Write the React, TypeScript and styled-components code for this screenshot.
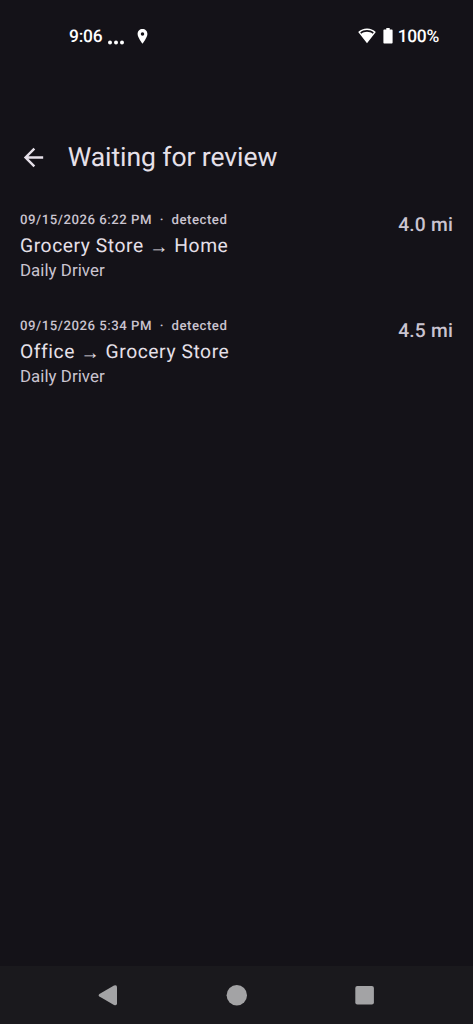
import React from "react";
import styled, { createGlobalStyle } from "styled-components";

const GlobalStyle = createGlobalStyle`
  *, *::before, *::after { box-sizing: border-box; }
  body { margin: 0; background: #141218; }
`;

const Screen = styled.div`
  display: flex;
  flex-direction: column;
  width: 100%;
  height: 100vh;
  background: #141218;
  color: #e6e0e9;
  font-family: Roboto, "Noto Sans", sans-serif;
  text-rendering: geometricPrecision;
  overflow: hidden;
`;

const StatusBar = styled.header`
  display: flex;
  justify-content: space-between;
  height: 119px;
  padding: 26px 34px 0 69px;
  color: #fff;
  font-size: 17.4px;
  font-weight: 500;
  line-height: 22px;
`;

const StatusGroup = styled.div`
  display: flex;
  height: 20px;
  white-space: nowrap;
`;

const Clock = styled.span`
  width: 38px;
  letter-spacing: -0.2px;
`;

const Percent = styled.span`
  margin-left: 5px;
  letter-spacing: -0.28px;
`;

const StatusIcon = styled.svg<{ $gap?: number }>`
  display: block;
  flex: none;
  margin-left: ${({ $gap = 0 }) => $gap}px;
  fill: #fff;
`;

const AppBar = styled.div`
  display: flex;
  align-items: center;
  height: 77px;
  padding-left: 19px;
`;

const BackButton = styled.button`
  display: flex;
  padding: 0;
  border: 0;
  background: none;
  color: inherit;
`;

const Title = styled.h1`
  margin: 0 0 0 19.7px;
  font-size: 26.5px;
  font-weight: 400;
  line-height: 34px;
  letter-spacing: -0.07px;
`;

const TripList = styled.ul`
  flex: 1;
  margin: 0;
  padding: 0;
  list-style: none;
`;

const TripItem = styled.li`
  display: flex;
  justify-content: space-between;
  height: 106px;
  padding: 15px 20px 0;
`;

const Overline = styled.div`
  color: #cac4d0;
  font-size: 13.2px;
  font-weight: 500;
  line-height: 20px;
  letter-spacing: 0.52px;
  white-space: pre;
`;

const Route = styled.div`
  font-size: 19.25px;
  line-height: 29px;
  letter-spacing: 0.57px;
`;

const RouteArrow = styled.span`
  display: inline-block;
  line-height: 1;
  transform: translateY(1px);
`;

const Vehicle = styled.div`
  color: #cac4d0;
  font-size: 16.85px;
  line-height: 23px;
  letter-spacing: 0.05px;
`;

const Distance = styled.div`
  color: #cac4d0;
  font-size: 19.25px;
  font-weight: 500;
  line-height: 28.6px;
  letter-spacing: 0.18px;
`;

const NavBar = styled.nav`
  display: flex;
  align-items: center;
  justify-content: space-between;
  height: 58px;
  padding: 0 97px;
  background: #1a191d;
`;

const NavIcon = styled.svg`
  display: block;
  fill: #a3a3a5;
`;

const trips = [
  { time: "09/15/2026 6:22 PM", from: "Grocery Store", to: "Home", miles: "4.0 mi" },
  { time: "09/15/2026 5:34 PM", from: "Office", to: "Grocery Store", miles: "4.5 mi" },
];

export default function App() {
  return (
    <Screen>
      <GlobalStyle />
      <StatusBar>
        <StatusGroup>
          <Clock>9:06</Clock>
          <StatusIcon width="18" height="20" viewBox="0 0 18 20">
            <circle cx="3" cy="16.5" r="2" />
            <circle cx="9" cy="16.5" r="2" />
            <circle cx="15" cy="16.5" r="2" />
          </StatusIcon>
          <StatusIcon $gap={12} width="11" height="20" viewBox="0 0 11 20">
            <path
              fillRule="evenodd"
              d="M5.5 3C2.7 3 .6 5.1.6 7.9c0 3.5 4.9 9.7 4.9 9.7s4.9-6.2 4.9-9.7C10.4 5.1 8.3 3 5.5 3Zm0 3.2a1.75 1.75 0 1 1 0 3.5 1.75 1.75 0 0 1 0-3.5Z"
            />
          </StatusIcon>
        </StatusGroup>
        <StatusGroup>
          <StatusIcon width="18" height="20" viewBox="0 0 18 20">
            <path
              fillRule="evenodd"
              d="M9 2.6C5.6 2.6 2.5 3.9.2 6.1L9 17.2l8.8-11.1C15.5 3.9 12.4 2.6 9 2.6Zm0 1.5c2.5 0 4.9.8 6.8 2.3l-1.1 1.3C13.1 6.5 11.1 5.8 9 5.8s-4.1.7-5.7 1.9L2.2 6.4C4.1 4.9 6.5 4.1 9 4.1Z"
            />
          </StatusIcon>
          <StatusIcon $gap={7} width="10" height="20" viewBox="0 0 10 20">
            <path d="M3.3 2h3.4v1.4h1.9c.6 0 1 .4 1 1v12.2c0 .6-.4 1-1 1H1.4c-.6 0-1-.4-1-1V4.4c0-.6.4-1 1-1h1.9Z" />
          </StatusIcon>
          <Percent>100%</Percent>
        </StatusGroup>
      </StatusBar>
      <AppBar>
        <BackButton aria-label="Back">
          <svg width="29" height="29" viewBox="0 0 24 24" fill="currentColor">
            <path d="M20 11H7.83l5.59-5.59L12 4l-8 8 8 8 1.41-1.41L7.83 13H20v-2Z" />
          </svg>
        </BackButton>
        <Title>Waiting for review</Title>
      </AppBar>
      <TripList>
        {trips.map((trip) => (
          <TripItem key={trip.time}>
            <div>
              <Overline>{trip.time + "  ·  detected"}</Overline>
              <Route>
                {trip.from} <RouteArrow>→</RouteArrow> {trip.to}
              </Route>
              <Vehicle>Daily Driver</Vehicle>
            </div>
            <Distance>{trip.miles}</Distance>
          </TripItem>
        ))}
      </TripList>
      <NavBar>
        <NavIcon width="22" height="22" viewBox="0 0 22 22">
          <path d="M2.4 10.1 17 1.5Q20 .3 20 3.2v16q0 2.9-3 1.700L2.400 12.600q-1.500-1.200 0-2.500Z" />
        </NavIcon>
        <NavIcon width="22" height="22" viewBox="0 0 22 22">
          <circle cx="10.8" cy="11.3" r="10.2" />
        </NavIcon>
        <NavIcon width="22" height="22" viewBox="0 0 22 22">
          <rect x="1.3" y="2" width="18.6" height="18.6" rx="2" />
        </NavIcon>
      </NavBar>
    </Screen>
  );
}
